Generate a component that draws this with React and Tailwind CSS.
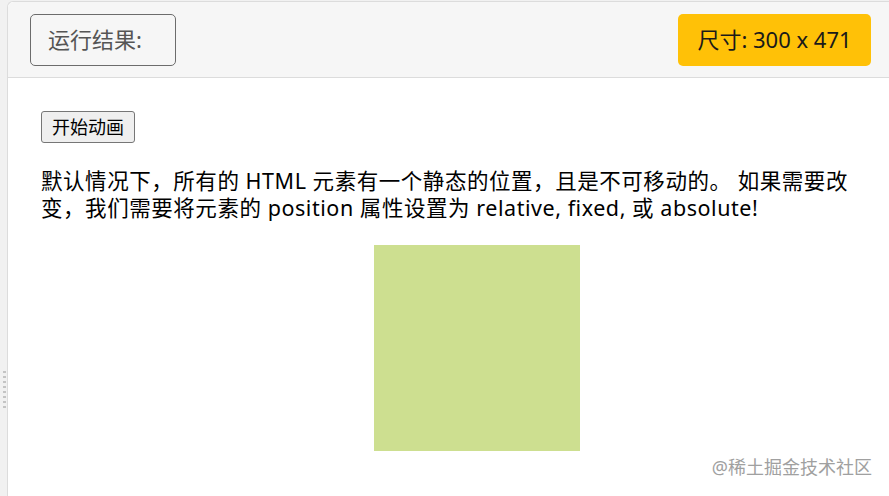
export default function App() {
    const font = { fontFamily: '"Noto Sans", "Noto Sans CJK SC", sans-serif' };

    return (
        <div
            className="relative flex h-[496px] w-[889px] overflow-hidden bg-[#f1f1f1] pt-[1px] font-['Noto_Sans','Noto_Sans_CJK_SC',sans-serif]"
        >
            {/* Resize grip strip */}
            <div className="flex w-[7px] flex-col items-center justify-center">
                <div className="mt-[282px] flex flex-col gap-[3px] pl-[1px]">
                    {[0, 1, 2, 3, 4, 5, 6, 7].map((i) => (
                        <span key={i} className="block h-[2px] w-[3px] bg-[#c4c4c4]" />
                    ))}
                </div>
            </div>

            {/* Result panel */}
            <div className="flex flex-1 flex-col rounded-tl-[6px] border-l border-t border-[#dcdcdc] bg-white">
                <div className="flex h-[76px] items-center justify-between rounded-tl-[6px] border-b border-[#dcdcdc] bg-[#f6f6f6] pl-[22px] pr-[18px]">
                    <div className="flex h-[52px] w-[146px] items-center rounded-[5px] border border-[#6c6c6c] pl-[17px] text-[22px] text-[#555]">
                        运行结果:
                    </div>
                    <div className="flex h-[52px] w-[193px] items-center justify-center rounded-[5px] bg-[#ffc107] text-[22px] text-[#1a1a1a]">
                        尺寸: 300 x 471
                    </div>
                </div>

                <div className="flex flex-col items-start pl-[33px] pt-[33px] text-black">
                    <button className="h-[32px] w-[94px] rounded-[3px] border border-[#767676] bg-[#efefef] text-[18px] leading-none">
                        开始动画
                    </button>
                    <p className="mt-[24px] text-[21.5px] leading-[27px] tracking-[0.55px]" style={font}>
                        默认情况下，所有的 HTML 元素有一个静态的位置，且是不可移动的。 如果需要改
                        <br />
                        变，我们需要将元素的 position 属性设置为 relative, fixed, 或 absolute!
                    </p>
                    <div className="ml-[333px] mt-[24px] h-[206px] w-[206px] bg-[#cddf90]" />
                </div>
            </div>

            {/* Watermark */}
            <div className="absolute bottom-[15px] right-[17px] text-[18px] text-[#a0a0a0]">
                @稀土掘金技术社区
            </div>
        </div>
    );
}
